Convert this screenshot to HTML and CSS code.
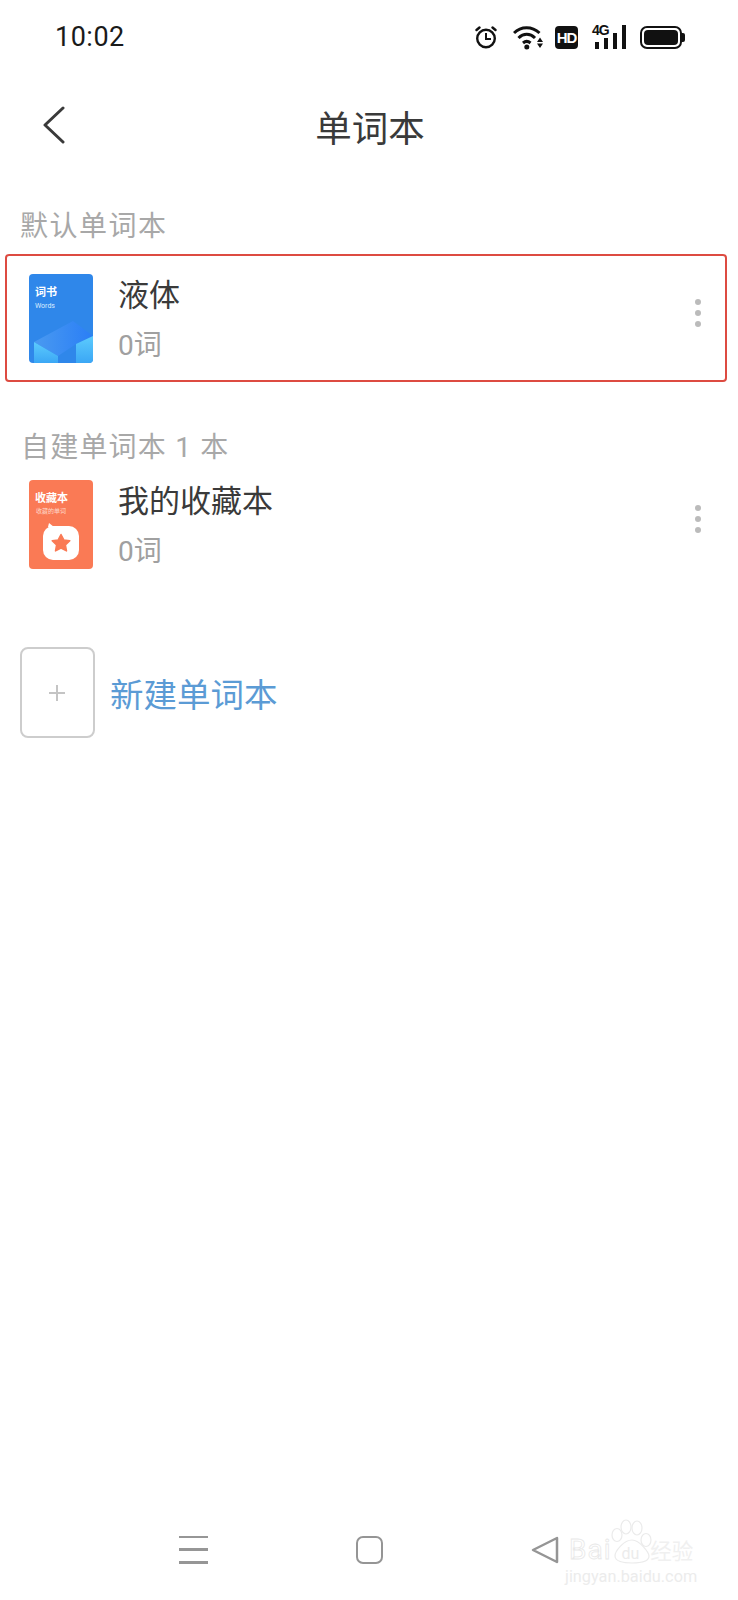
FILE: index.html
```html
<!DOCTYPE html>
<html lang="zh-CN">
<head>
    <meta charset="UTF-8">
    <title>单词本</title>
    <link rel="stylesheet" href="styles.css">
</head>
<body>
    <div class="page">
        <div class="status-bar">
            <span class="time">10:02</span>
            <div class="status-icons">
                <!-- alarm -->
                <svg width="22" height="24" viewBox="0 0 22 24" fill="none" stroke="#111" stroke-width="2.4">
                    <circle cx="11" cy="13.500" r="8.800"/>
                    <path d="M11 8v6h5" stroke-width="2"/>
                    <path d="M1.500 5 4.500 2.500M20.500 5 17.500 2.500" stroke-linecap="round"/>
                </svg>
                <!-- wifi -->
                <svg class="wifi" width="30" height="25" viewBox="0 0 30 25" fill="none" stroke="#111" stroke-width="3">
                    <path d="M1 8C8 1 19 1 26.500 8"/>
                    <path d="M5.500 13C10.500 8 17 8 22 13"/>
                    <path d="M10 18C12.500 15.800 15 15.800 17.500 18"/>
                    <circle cx="13.800" cy="22" r="2.500" fill="#111" stroke="none"/>
                    <path d="M24 17l3-4.500 3 4.500zM24 18.500l3 4.500 3-4.500z" fill="#111" stroke="none"/>
                </svg>
                <span class="hd">HD</span>
                <div class="signal">
                    <span class="net">4G</span>
                    <span class="bar bar-1"></span>
                    <span class="bar bar-2"></span>
                    <span class="bar bar-3"></span>
                    <span class="bar bar-4"></span>
                </div>
                <div class="battery"><span class="battery-fill"></span></div>
            </div>
        </div>

        <header class="title-bar">
            <svg class="back" width="22" height="38" viewBox="0 0 22 38" fill="none" stroke="#3a3a3a" stroke-width="3" stroke-linecap="round" stroke-linejoin="round">
                <path d="M20 2 2 19l18 17"/>
            </svg>
            <h1>单词本</h1>
        </header>

        <h2 class="section-label first">默认单词本</h2>
        <div class="book-row highlighted">
            <svg class="cover" width="64" height="89" viewBox="0 0 64 89">
                <defs>
                    <linearGradient id="side" x1="0" y1="0" x2="0" y2="1">
                        <stop offset="0" stop-color="#5ccbfd"/>
                        <stop offset="1" stop-color="#3ba7f5"/>
                    </linearGradient>
                    <linearGradient id="top" x1="0" y1="0" x2="1" y2="0">
                        <stop offset="0" stop-color="#4a9af0"/>
                        <stop offset="1" stop-color="#2a7ef6"/>
                    </linearGradient>
                    <clipPath id="cover-clip"><rect width="64" height="89" rx="4"/></clipPath>
                </defs>
                <g clip-path="url(#cover-clip)">
                    <rect width="64" height="89" fill="#2f87ea"/>
                    <path d="M5 68 44 47 64 62 47 70 29 82z" fill="url(#top)"/>
                    <path d="M5 68 29 82V89H5z" fill="url(#side)"/>
                    <path d="M47 70 64 62V89H47z" fill="url(#side)"/>
                    <text x="6" y="22" class="cover-title">词书</text>
                    <text x="6" y="34" class="cover-sub">Words</text>
                </g>
            </svg>
            <div class="book-info">
                <div class="book-name">液体</div>
                <div class="book-count">0词</div>
            </div>
            <div class="more"><span></span><span></span><span></span></div>
        </div>

        <h2 class="section-label second">自建单词本 1 本</h2>
        <div class="book-row short">
            <svg class="cover" width="64" height="89" viewBox="0 0 64 89">
                <rect width="64" height="89" rx="4" fill="#fa7a55"/>
                <text x="6" y="22" class="cover-title">收藏本</text>
                <text x="7" y="33" class="cover-tiny">收藏的单词</text>
                <path d="M20 43l5 4H19z" fill="#fff"/>
                <rect x="14" y="46" width="36" height="34" rx="10" fill="#fff"/>
                <path d="M32 54.500l2.800 5.400 6 .8-4.400 4.200 1.100 6-5.500-2.900-5.500 2.900 1.100-6-4.400-4.200 6-.8z" fill="#fa7a55" stroke="#fa7a55" stroke-width="1.500" stroke-linejoin="round"/>
            </svg>
            <div class="book-info">
                <div class="book-name">我的收藏本</div>
                <div class="book-count">0词</div>
            </div>
            <div class="more"><span></span><span></span><span></span></div>
        </div>

        <div class="add-row">
            <div class="add-box">
                <svg width="16" height="16" viewBox="0 0 16 16" stroke="#c4c4c4" stroke-width="2"><path d="M8 0v16M0 8h16"/></svg>
            </div>
            <span class="add-text">新建单词本</span>
        </div>

        <nav class="nav-bar">
            <div class="menu-icon"><span></span><span></span><span></span></div>
            <div class="home-icon"></div>
            <svg width="28" height="28" viewBox="0 0 28 28" fill="none" stroke="#959595" stroke-width="2.500" stroke-linejoin="round">
                <path d="M26 2 2 14l24 12z"/>
            </svg>
        </nav>

        <div class="watermark">
            <svg class="paw" width="44" height="50" viewBox="0 0 44 50" fill="none" stroke="#ebebeb" stroke-width="1.200">
                <ellipse cx="7" cy="17" rx="5" ry="6.500"/>
                <ellipse cx="16" cy="9" rx="5" ry="7"/>
                <ellipse cx="27" cy="10" rx="5" ry="7"/>
                <ellipse cx="36" cy="22" rx="5" ry="6.500"/>
                <path d="M22 22C30 22 39 35 39 38C39 43 31 45 22 45C13 45 5 43 5 38C5 33 14 22 22 22Z"/>
            </svg>
            <div class="wm-line">
                <span class="wm-bai">Bai</span>
                <span class="wm-du">du</span>
                <span class="wm-cn">经验</span>
            </div>
            <div class="wm-url">jingyan.baidu.com</div>
        </div>
    </div>
</body>
</html>
```

FILE: styles.css
```css
* {
    margin: 0;
    padding: 0;
    box-sizing: border-box;
    font-family: Roboto, 'Noto Sans CJK SC', sans-serif;
}

body {
    background-color: #fff;
}

.page {
    position: relative;
    width: 738px;
    height: 1600px;
    display: flex;
    flex-direction: column;
    overflow: hidden;
}

/* Status bar */
.status-bar {
    height: 74px;
    display: flex;
    align-items: center;
    justify-content: space-between;
    padding: 0 53px 0 55px;
}

.time {
    font-size: 27px;
    color: #1a1a1a;
    letter-spacing: 0.5px;
}

.status-icons {
    display: flex;
    align-items: center;
    gap: 14px;
}

.wifi {
    margin: 0 -2px 0 2px;
}

.hd {
    width: 23px;
    height: 23px;
    background-color: #111;
    border-radius: 4px;
    color: #fff;
    font-size: 15px;
    font-weight: 700;
    line-height: 23px;
    text-align: center;
    font-family: 'Liberation Sans', sans-serif;
    letter-spacing: -1px;
}

.signal {
    position: relative;
    width: 34px;
    height: 24px;
    display: flex;
    align-items: flex-end;
    justify-content: flex-end;
    gap: 5px;
}

.net {
    position: absolute;
    left: 0;
    top: -2px;
    font-size: 14px;
    font-weight: 700;
    line-height: 15px;
    color: #111;
    font-family: 'Liberation Sans', sans-serif;
    letter-spacing: -1px;
}

.bar {
    width: 4px;
    background-color: #111;
}

.bar-1 { height: 7px; }
.bar-2 { height: 11px; }
.bar-3 { height: 16px; }
.bar-4 { height: 24px; }

.battery {
    position: relative;
    width: 42px;
    height: 23px;
    border: 2px solid #111;
    border-radius: 7px;
    padding: 2px;
    margin-right: 3px;
}

.battery::after {
    content: '';
    position: absolute;
    right: -5px;
    top: 5px;
    width: 3px;
    height: 9px;
    background-color: #111;
    border-radius: 0 2px 2px 0;
}

.battery-fill {
    display: block;
    height: 100%;
    background-color: #111;
    border-radius: 4px;
}

/* Title bar */
.title-bar {
    position: relative;
    height: 104px;
    display: flex;
    align-items: center;
    justify-content: center;
}

.back {
    position: absolute;
    left: 43px;
    top: 32px;
}

h1 {
    font-size: 36.500px;
    font-weight: 400;
    color: #3a3a3a;
    margin-left: 2px;
}

/* Sections */
.section-label {
    font-size: 28px;
    font-weight: 400;
    color: #a8a8a8;
    line-height: 40px;
}

.section-label.first {
    margin: 29px 0 7px 20px;
    letter-spacing: 1.500px;
}

.section-label.second {
    margin: 46px 0 2px 21px;
    letter-spacing: 1.200px;
}

.book-row {
    height: 128px;
    margin: 0 11px 0 5px;
    padding: 0 26px 0 24px;
    display: flex;
    align-items: center;
}

.book-row.short {
    height: 108px;
}

.book-row.highlighted {
    border: 2px solid #dd4b41;
    border-radius: 4px;
    padding: 0 24px 0 22px;
}

.cover {
    flex-shrink: 0;
}

.cover-title {
    font-size: 11px;
    font-weight: 700;
    fill: #fff;
}

.cover-sub {
    font-size: 7px;
    fill: #dcecff;
}

.cover-tiny {
    font-size: 6px;
    fill: #ffd9cc;
}

.book-info {
    margin-left: 25px;
    padding-top: 4px;
    flex: 1;
}

.book-name {
    font-size: 31px;
    line-height: 44px;
    color: #3a3a3a;
}

.book-count {
    font-size: 28px;
    line-height: 40px;
    margin-top: 8px;
    color: #a0a0a0;
}

.more {
    display: flex;
    flex-direction: column;
    gap: 5px;
    margin-bottom: 10px;
}

.more span {
    width: 6px;
    height: 6px;
    border-radius: 50%;
    background-color: #bbb;
}

/* New wordbook */
.add-row {
    display: flex;
    align-items: center;
    margin: 69px 0 0 20px;
}

.add-box {
    width: 75px;
    height: 91px;
    border: 2px solid #cdcdcd;
    border-radius: 8px;
    display: flex;
    align-items: center;
    justify-content: center;
    padding-right: 2px;
}

.add-text {
    margin-left: 15px;
    font-size: 33.500px;
    color: #5b9bd5;
}

/* Bottom navigation */
.nav-bar {
    margin-top: auto;
    height: 101px;
    padding: 0 179px;
    display: flex;
    align-items: center;
    justify-content: space-between;
}

.menu-icon {
    width: 29px;
    height: 28px;
    display: flex;
    flex-direction: column;
    justify-content: space-between;
}

.menu-icon span {
    height: 2.500px;
    background-color: #969696;
}

.home-icon {
    width: 27px;
    height: 28px;
    border: 2.500px solid #959595;
    border-radius: 7px;
}

/* Watermark */
.watermark {
    position: absolute;
    left: 565px;
    top: 1518px;
    width: 136px;
    color: #ececec;
}

.paw {
    position: absolute;
    left: 45px;
    top: 0;
}

.wm-line {
    display: flex;
    align-items: baseline;
    margin: 18px 0 0 4px;
    line-height: 28px;
    white-space: nowrap;
}

.wm-bai {
    font-size: 28px;
    letter-spacing: 1px;
    color: #fff;
    -webkit-text-stroke: 0.800px #e8e8e8;
}

.wm-du {
    font-size: 16px;
    margin-left: 10px;
}

.wm-cn {
    font-size: 21.500px;
    margin-left: 11px;
    color: #f0f0f0;
}

.wm-url {
    font-size: 16.300px;
    line-height: 19px;
    margin-top: -1px;
    white-space: nowrap;
}
```
